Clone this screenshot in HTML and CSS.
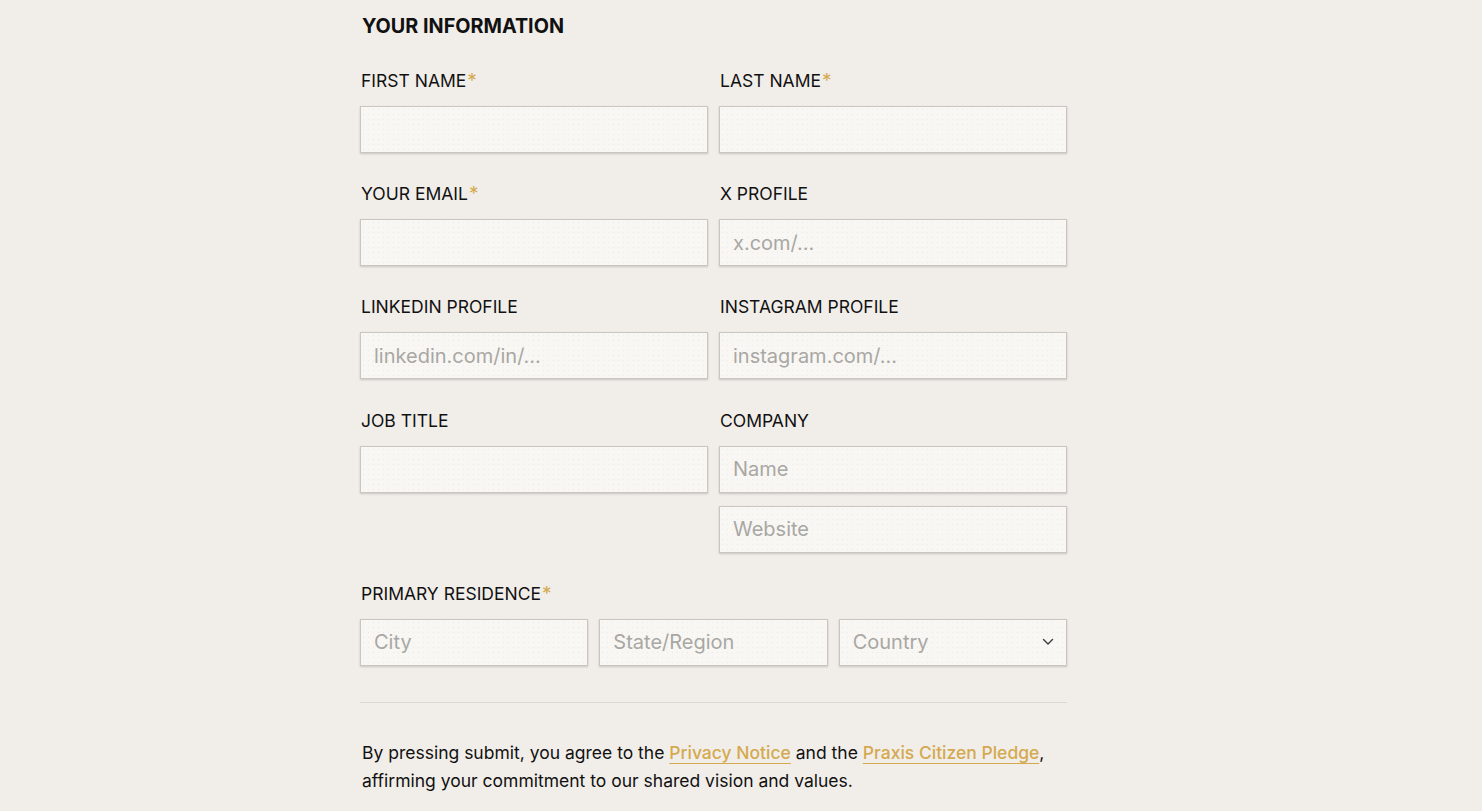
FILE: index.html
```html
<!DOCTYPE html>
<html lang="en">
<head>
<meta charset="utf-8">
<title>Your Information</title>
<link rel="stylesheet" href="styles.css">
</head>
<body>
<main class="page">
  <form class="form">
    <h2 class="section-title">YOUR INFORMATION</h2>

    <div class="grid two">
      <div class="field">
        <label class="label">FIRST NAME<span class="req">*</span></label>
        <input class="input" type="text">
      </div>
      <div class="field">
        <label class="label">LAST NAME<span class="req">*</span></label>
        <input class="input" type="text">
      </div>
      <div class="field">
        <label class="label">YOUR EMAIL<span class="req">*</span></label>
        <input class="input" type="email">
      </div>
      <div class="field">
        <label class="label">X PROFILE</label>
        <input class="input" type="text" placeholder="x.com/...">
      </div>
      <div class="field">
        <label class="label">LINKEDIN PROFILE</label>
        <input class="input" type="text" placeholder="linkedin.com/in/...">
      </div>
      <div class="field">
        <label class="label">INSTAGRAM PROFILE</label>
        <input class="input" type="text" placeholder="instagram.com/...">
      </div>
      <div class="field">
        <label class="label">JOB TITLE</label>
        <input class="input" type="text">
      </div>
      <div class="field">
        <label class="label">COMPANY</label>
        <div class="stack">
          <input class="input" type="text" placeholder="Name">
          <input class="input" type="text" placeholder="Website">
        </div>
      </div>
    </div>

    <div class="field">
      <label class="label">PRIMARY RESIDENCE<span class="req">*</span></label>
      <div class="grid three">
        <input class="input" type="text" placeholder="City">
        <input class="input" type="text" placeholder="State/Region">
        <div class="select">
          <span class="select-text">Country</span>
          <svg class="chevron" width="12" height="8" viewBox="0 0 12 8" aria-hidden="true"><path d="M1.5 1.5 L6 6 L10.5 1.5" fill="none" stroke="#3a3a3a" stroke-width="1.4" stroke-linecap="round" stroke-linejoin="round"/></svg>
        </div>
      </div>
    </div>

    <hr class="divider">

    <p class="legal">By pressing submit, you agree to the <a href="#" class="link">Privacy Notice</a> and the <a href="#" class="link">Praxis Citizen Pledge</a>, affirming your commitment to our shared vision and values.</p>
  </form>
</main>
</body>
</html>
```

FILE: styles.css
```css
* { box-sizing: border-box; }

html, body {
  margin: 0;
  padding: 0;
  background: #f1eeea;
  color: #111;
  font-family: Inter, "Noto Sans", "Liberation Sans", sans-serif;
}

.page {
  padding: 14px 0 0 360px;
}

.form {
  width: 707px;
}

.section-title {
  margin: 0 0 30px 2px;
  font-size: 19.8px;
  line-height: 24px;
  font-weight: 700;
}

.grid {
  display: grid;
  column-gap: 11px;
}

.grid.two {
  grid-template-columns: 1fr 1fr;
  row-gap: 28.2px;
  margin-bottom: 28px;
}

.grid.three {
  grid-template-columns: 1fr 1fr 1fr;
}

.field {
  display: flex;
  flex-direction: column;
}

.label {
  display: block;
  margin: 0 0 13px 1px;
  padding-top: 1px;
  font-size: 17.5px;
  line-height: 24px;
  font-weight: 400;
  color: #111;
}

.req {
  color: #d4a94f;
  font-size: 19px;
  line-height: 1;
  margin-left: 1px;
}

.stack {
  display: flex;
  flex-direction: column;
  gap: 13px;
}

.input,
.select {
  display: block;
  width: 100%;
  height: 47px;
  margin: 0;
  padding: 0 13px;
  border: 1px solid #c9c6c1;
  border-radius: 0;
  background-color: #f8f7f4;
  background-image: radial-gradient(circle, rgba(120, 110, 100, 0.09) 0.6px, transparent 0.9px);
  background-size: 5px 5px;
  box-shadow: 0 1px 2px rgba(0, 0, 0, 0.18);
  font-family: Inter, "Noto Sans", "Liberation Sans", sans-serif;
  font-size: 20px;
  color: #111;
  outline: none;
}

.input::placeholder {
  color: #a9a7a3;
  opacity: 1;
}

.select {
  display: flex;
  align-items: center;
  justify-content: space-between;
  padding-right: 12px;
}

.select-text {
  color: #a9a7a3;
}

.chevron {
  display: block;
}

.divider {
  margin: 36px 0 36px 0;
  border: 0;
  border-top: 1px solid #dcd8d3;
  height: 0;
}

.legal {
  margin: 0 0 0 2px;
  font-size: 17.5px;
  line-height: 28px;
  color: #111;
}

.link {
  color: #d4a94f;
  text-decoration: underline;
  text-decoration-thickness: 1px;
  text-underline-offset: 4px;
  font-weight: 500;
}
```
